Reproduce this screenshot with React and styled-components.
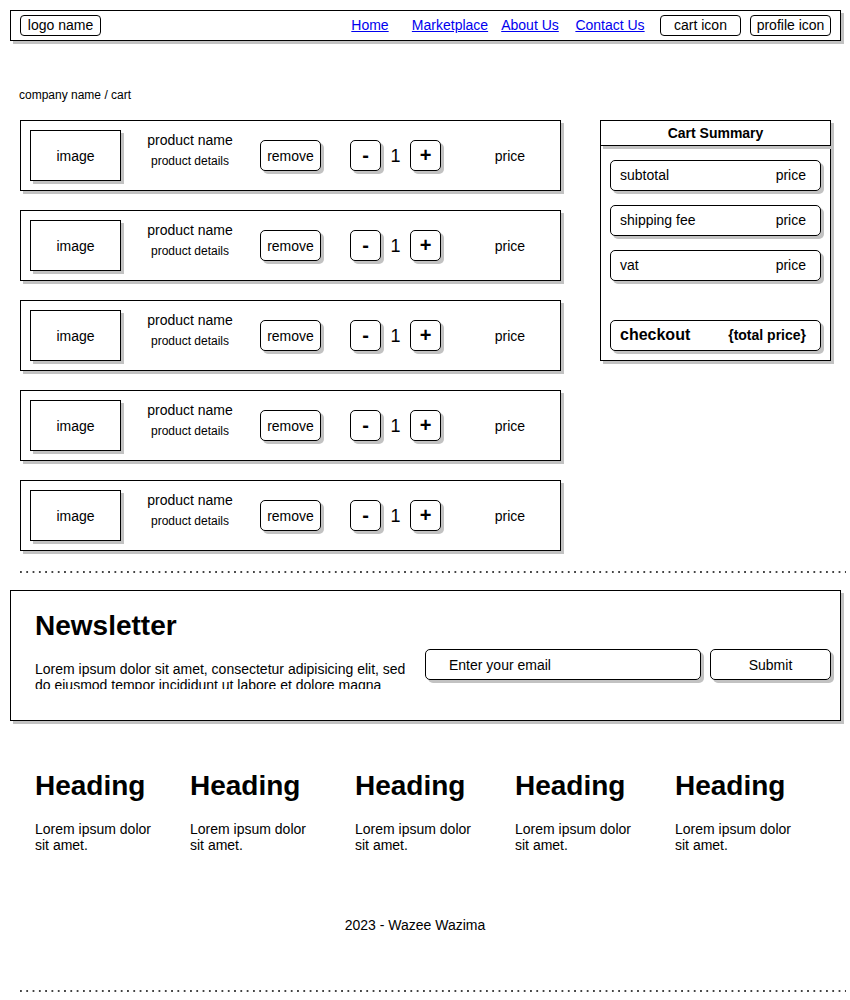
import React from 'react'
import styled, { createGlobalStyle } from 'styled-components';

const GlobalStyle = createGlobalStyle`
    * {
        box-sizing: border-box;
    }
    body {
        margin: 0;
        background: #ffffff;
        color: #000000;
        font-family: "Liberation Sans", Arial, sans-serif;
    }
`;

const shadow = '3px 3px 0 #c2c2c2';

const Page = styled.div`
    width: 850px;
    padding-top: 10px;
`;

const NavBar = styled.nav`
    display: flex;
    align-items: center;
    margin-left: 10px;
    width: 831px;
    height: 31px;
    padding: 0 9px 1px;
    border: 1px solid #000;
    box-shadow: ${shadow};
`;

const NavButton = styled.div`
    width: 81px;
    height: 21px;
    display: flex;
    align-items: center;
    justify-content: center;
    border: 1px solid #000;
    border-radius: 4px;
    font-size: 14px;
    margin-left: ${props => props.$gap || 0}px;
`;

const NavLinks = styled.div`
    display: flex;
    margin-left: auto;
`;

const NavLink = styled.a`
    width: 80px;
    text-align: center;
    font-size: 14px;
    color: #0000ee;
    text-decoration: underline;
`;

const Breadcrumb = styled.div`
    margin-top: 47px;
    padding-left: 19px;
    font-size: 12px;
    line-height: 14px;
`;

const Main = styled.div`
    display: flex;
    align-items: flex-start;
    margin-top: 18px;
    padding-left: 20px;
`;

const CartList = styled.div`
    display: flex;
    flex-direction: column;
    gap: 19px;
`;

const CartItem = styled.div`
    display: flex;
    align-items: center;
    width: 541px;
    height: 71px;
    padding-left: 9px;
    border: 1px solid #000;
    box-shadow: ${shadow};
`;

const ImageBox = styled.div`
    width: 91px;
    height: 51px;
    display: flex;
    align-items: center;
    justify-content: center;
    border: 1px solid #000;
    box-shadow: ${shadow};
    font-size: 14px;
`;

const ProductInfo = styled.div`
    width: 120px;
    margin-left: 9px;
    padding-bottom: 12px;
    text-align: center;
`;

const ProductName = styled.div`
    font-size: 14px;
    line-height: 16px;
`;

const ProductDetails = styled.div`
    margin-top: 6px;
    font-size: 12px;
    line-height: 14px;
`;

const RoundButton = styled.div`
    width: ${props => props.$w}px;
    height: 31px;
    display: flex;
    align-items: center;
    justify-content: center;
    margin-left: ${props => props.$gap || 0}px;
    border: 1px solid #000;
    border-radius: 5px;
    box-shadow: ${shadow};
    font-size: ${props => props.$size || 14}px;
    font-weight: ${props => props.$bold ? 'bold' : 'normal'};
`;

const Count = styled.div`
    width: 29px;
    text-align: center;
    font-size: 18px;
    padding-top: 2px;
`;

const Price = styled.div`
    width: 100px;
    margin-left: 19px;
    text-align: center;
    font-size: 14px;
`;

const Summary = styled.aside`
    width: 231px;
    margin-left: 39px;
`;

const SummaryHeader = styled.div`
    height: 26px;
    display: flex;
    align-items: center;
    justify-content: center;
    padding-bottom: 1px;
    border: 1px solid #000;
    box-shadow: ${shadow};
    font-size: 14px;
    font-weight: bold;
    position: relative;
    z-index: 1;
`;

const SummaryBody = styled.div`
    height: 216px;
    margin-top: -1px;
    display: flex;
    flex-direction: column;
    gap: 14px;
    padding: 14px 9px 9px;
    border: 1px solid #000;
    box-shadow: ${shadow};
`;

const SummaryRow = styled.div`
    height: 31px;
    display: flex;
    align-items: center;
    justify-content: space-between;
    padding: 0 14px 1px 9px;
    border: 1px solid #000;
    border-radius: 5px;
    box-shadow: ${shadow};
    font-size: 14px;
    font-weight: ${props => props.$bold ? 'bold' : 'normal'};
    margin-top: ${props => props.$push ? 'auto' : '0'};
`;

const CheckoutLabel = styled.span`
    font-size: 16px;
`;

const Dotted = styled.div`
    margin-top: ${props => props.$top}px;
    margin-left: 20px;
    width: 826px;
    height: 2px;
    background-image: linear-gradient(to right, #444 2px, transparent 2px);
    background-size: 6.3px 2px;
    background-repeat: repeat-x;
`;

const Newsletter = styled.section`
    display: flex;
    align-items: flex-start;
    margin-top: 17px;
    margin-left: 10px;
    width: 831px;
    height: 131px;
    border: 1px solid #000;
    box-shadow: ${shadow};
`;

const NewsText = styled.div`
    width: 414px;
    padding: 19px 0 0 24px;
`;

const BigHeading = styled.h2`
    margin: 0;
    font-size: 28px;
    line-height: 32px;
    font-weight: bold;
`;

const Clipped = styled.p`
    margin: ${props => props.$top}px 0 0;
    width: ${props => props.$w}px;
    height: ${props => props.$h}px;
    overflow: hidden;
    font-size: 14px;
    line-height: 16px;
`;

const NewsForm = styled.div`
    display: flex;
    margin-top: 58px;
`;

const EmailInput = styled.div`
    width: 276px;
    height: 31px;
    display: flex;
    align-items: center;
    padding-left: 23px;
    border: 1px solid #000;
    border-radius: 5px;
    box-shadow: ${shadow};
    font-size: 14px;
`;

const Columns = styled.div`
    display: grid;
    grid-template-columns: 155px 165px 160px 160px 160px;
    margin-top: 49px;
    padding-left: 35px;
`;

const Credit = styled.div`
    margin-top: 67px;
    text-align: center;
    padding-right: 20px;
    font-size: 14px;
    line-height: 16px;
`;

const items = [1, 2, 3, 4, 5];

function App() {
    return (
        <Page>
            <GlobalStyle />
            <NavBar>
                <NavButton>logo name</NavButton>
                <NavLinks>
                    <NavLink href="#">Home</NavLink>
                    <NavLink href="#">Marketplace</NavLink>
                    <NavLink href="#">About Us</NavLink>
                    <NavLink href="#">Contact Us</NavLink>
                </NavLinks>
                <NavButton $gap={10}>cart icon</NavButton>
                <NavButton $gap={9}>profile icon</NavButton>
            </NavBar>

            <Breadcrumb>company name / cart</Breadcrumb>

            <Main>
                <CartList>
                    {items.map(i => (
                        <CartItem key={i}>
                            <ImageBox>image</ImageBox>
                            <ProductInfo>
                                <ProductName>product name</ProductName>
                                <ProductDetails>product details</ProductDetails>
                            </ProductInfo>
                            <RoundButton $w={61} $gap={10}>remove</RoundButton>
                            <RoundButton $w={31} $gap={29} $size={20} $bold>-</RoundButton>
                            <Count>1</Count>
                            <RoundButton $w={31} $size={20} $bold>+</RoundButton>
                            <Price>price</Price>
                        </CartItem>
                    ))}
                </CartList>

                <Summary>
                    <SummaryHeader>Cart Summary</SummaryHeader>
                    <SummaryBody>
                        <SummaryRow><span>subtotal</span><span>price</span></SummaryRow>
                        <SummaryRow><span>shipping fee</span><span>price</span></SummaryRow>
                        <SummaryRow><span>vat</span><span>price</span></SummaryRow>
                        <SummaryRow $bold $push>
                            <CheckoutLabel>checkout</CheckoutLabel>
                            <span>{'{total price}'}</span>
                        </SummaryRow>
                    </SummaryBody>
                </Summary>
            </Main>

            <Dotted $top={20} />

            <Newsletter>
                <NewsText>
                    <BigHeading>Newsletter</BigHeading>
                    <Clipped $top={19} $w={380} $h={28}>
                        Lorem ipsum dolor sit amet, consectetur adipisicing elit, sed do eiusmod tempor incididunt ut labore et dolore magna aliqua.
                    </Clipped>
                </NewsText>
                <NewsForm>
                    <EmailInput>Enter your email</EmailInput>
                    <RoundButton $w={121} $gap={9}>Submit</RoundButton>
                </NewsForm>
            </Newsletter>

            <Columns>
                {items.map(i => (
                    <div key={i}>
                        <BigHeading>Heading</BigHeading>
                        <Clipped $top={19} $w={125} $h={29}>Lorem ipsum dolor sit amet.</Clipped>
                    </div>
                ))}
            </Columns>

            <Credit>2023 - Wazee Wazima</Credit>

            <Dotted $top={57} />
        </Page>
    )
}

export default App
